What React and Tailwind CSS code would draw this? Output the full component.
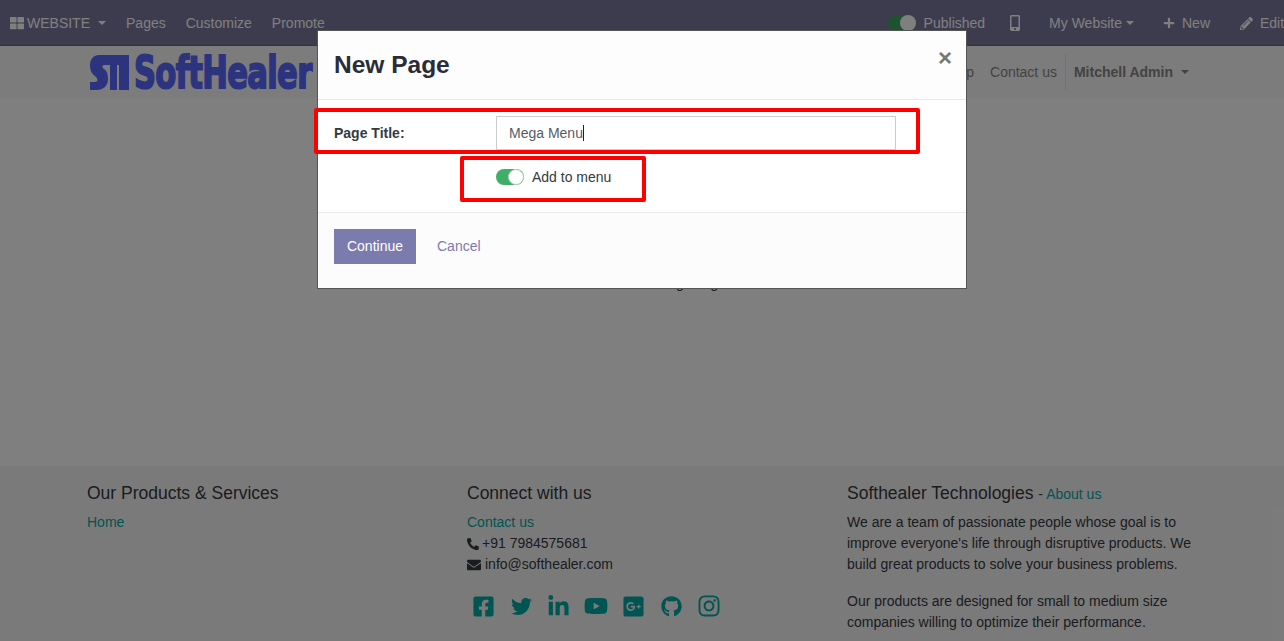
import React from "react";
import {
    FaThLarge, FaMobileAlt, FaPlus, FaPencilAlt, FaPhoneAlt, FaEnvelope,
    FaFacebookSquare, FaTwitter, FaLinkedinIn, FaYoutube, FaGooglePlusSquare, FaGithub, FaInstagram,
} from "react-icons/fa";

function Caret() {
    return <span className="inline-block w-0 h-0 border-x-[4px] border-x-transparent border-t-[4px] border-t-current" />;
}

function TopBar() {
    return (
        <header className="h-[46px] flex-none flex items-center justify-between pl-[10px] pt-[1px] bg-[#7a789e] border-b border-[#66648a] text-white text-[14px] whitespace-nowrap">
            <div className="flex items-center">
                <FaThLarge className="text-[14px] mr-[3px]" />
                <span>WEBSITE</span>
                <span className="ml-[8px] mr-[20px] flex"><Caret /></span>
                <span className="mr-[20px]">Pages</span>
                <span className="mr-[20px]">Customize</span>
                <span>Promote</span>
            </div>
            <div className="flex items-center -mr-[14px]">
                <span className="relative w-[28px] h-[16px] rounded-full bg-[#3aa65c] mr-[8px]">
                    <span className="absolute right-0 top-0 w-[16px] h-[16px] rounded-full bg-white" />
                </span>
                <span className="mr-[22px]">Published</span>
                <FaMobileAlt className="text-[16px] mr-[26px]" />
                <span className="mr-[4px]">My Website</span>
                <span className="mr-[29px] flex"><Caret /></span>
                <FaPlus className="text-[12px] mr-[7px]" />
                <span className="mr-[30px]">New</span>
                <FaPencilAlt className="text-[13px] mr-[7px]" />
                <span className="w-[38px]">Edit</span>
            </div>
        </header>
    );
}

function Logo() {
    return (
        <div className="flex items-center w-[223px] h-[36px]">
            <svg width="39" height="35" viewBox="0 0 39 35" className="flex-none">
                <path d="M9 0H39V35H29V10H27V35H20V10H14C12 10 12 13 14 14C17 16 18 19 18 24C18 31 13 35 7 35H0V27H5C8 27 8 24 6 22C2 19 0 16 0 10C0 4 4 0 9 0Z" fill="#5b69ff" />
            </svg>
            <span className="flex-none ml-[5px] origin-left scale-x-[0.68] font-['DejaVu_Sans'] font-bold text-[45px] leading-none tracking-[-1px] text-[#5b69ff] [-webkit-text-stroke:2px_#5b69ff]">SoftHealer</span>
        </div>
    );
}

function NavBar() {
    return (
        <nav className="h-[52px] flex-none bg-[#f9f9f9] flex items-center pl-[90px] pr-[95px] justify-between text-[14px] text-[#868686]">
            <Logo />
            <div className="flex items-center">
                <span className="mr-[16px]">Shop</span>
                <span>Contact us</span>
                <span className="ml-[8px] h-[36px] border-l border-[#e4e4e4] pl-[8px] flex items-center font-bold">
                    Mitchell Admin
                    <span className="ml-[8px] flex"><Caret /></span>
                </span>
            </div>
        </nav>
    );
}

function Footer() {
    const icons = [
        [FaFacebookSquare, "text-[23px]"],
        [FaTwitter, "text-[21px]"],
        [FaLinkedinIn, "text-[23px]"],
        [FaYoutube, "text-[24px]"],
        [FaGooglePlusSquare, "text-[23px]"],
        [FaGithub, "text-[21px]"],
        [FaInstagram, "text-[24px]"],
    ];
    return (
        <footer className="flex-1 bg-[#f5f5f5] pt-[16px] pl-[87px] text-[14px] leading-[21px] text-[#343a40]">
            <div className="grid grid-cols-[380px_380px_350px]">
                <section>
                    <h5 className="text-[17.5px] leading-[22px] mb-[8px]">Our Products &amp; Services</h5>
                    <a className="text-[#00a9a5]">Home</a>
                </section>
                <section>
                    <h5 className="text-[17.5px] leading-[22px] mb-[8px]">Connect with us</h5>
                    <a className="block text-[#00a9a5]">Contact us</a>
                    <div className="flex items-center gap-[3px]"><FaPhoneAlt className="text-[12px]" />+91 7984575681</div>
                    <div className="flex items-center gap-[4px]"><FaEnvelope className="text-[14px]" />info@softhealer.com</div>
                    <div className="flex items-center mt-[20px] -ml-[2px] text-[#00a9a5] h-[22px]">
                        {icons.map(([Icon, size], i) => (
                            <span key={i} className="w-[37.5px] flex-none flex justify-center">
                                <Icon className={size} />
                            </span>
                        ))}
                    </div>
                </section>
                <section>
                    <h5 className="h-[22px] text-[17.5px] leading-[22px] mb-[8px]">
                        Softhealer Technologies <span className="text-[14px]">- <a className="text-[#00a9a5]">About us</a></span>
                    </h5>
                    <p className="mb-[16px]">We are a team of passionate people whose goal is to improve everyone's life through disruptive products. We build great products to solve your business problems.</p>
                    <p>Our products are designed for small to medium size companies willing to optimize their performance.</p>
                </section>
            </div>
        </footer>
    );
}

function NewPageModal() {
    return (
        <div className="absolute left-[317px] top-[30px] w-[650px] h-[259px] bg-white border border-[#555555] text-[14px] text-[#343a40]">
            <div className="relative h-[69px] border-b border-[#e9e9e9] bg-[#fdfdfd] flex items-center pl-[16px]">
                <h4 className="text-[24.5px] font-bold text-[#2c2c36] leading-none">New Page</h4>
                <span className="absolute right-[14px] top-[15px] text-[24px] font-bold leading-[24px] text-[#777777]">×</span>
            </div>
            <div className="h-[112px] pt-[16px] pl-[16px]">
                <div className="flex items-center h-[34px]">
                    <label className="w-[162px] font-bold">Page Title:</label>
                    <div className="w-[400px] h-[34px] border border-[#cccccc] flex items-center pl-[12px] text-[#555b66]">
                        Mega Menu<span className="w-px h-[16px] bg-[#222222]" />
                    </div>
                </div>
                <div className="flex items-center ml-[162px] mt-[10px] h-[34px]">
                    <span className="relative w-[28px] h-[16px] rounded-full bg-[#3fae67] mr-[8px]">
                        <span className="absolute right-0 top-0 w-[16px] h-[16px] rounded-full bg-white border border-[#b9cdbf]" />
                    </span>
                    <span>Add to menu</span>
                </div>
            </div>
            <div className="h-[76px] border-t border-[#e9ecef] bg-[#fcfcfd] pt-[16px] pl-[16px] flex items-start">
                <button className="w-[82px] h-[35px] bg-[#7c7bad] text-white">Continue</button>
                <button className="ml-[21px] h-[35px] text-[#7c7bad]">Cancel</button>
            </div>
            {/* red marks from the screenshot annotation */}
            <div className="absolute left-[-4px] top-[77px] w-[606px] h-[46px] border-[4px] border-[#ff0000] rounded-[2px]" />
            <div className="absolute left-[142px] top-[125px] w-[186px] h-[46px] border-[4px] border-[#ff0000] rounded-[2px]" />
        </div>
    );
}

export default function App() {
    return (
        <div className="relative h-screen overflow-hidden flex flex-col bg-white font-['Liberation_Sans',sans-serif]">
            <TopBar />
            <NavBar />
            <main className="h-[368px] flex-none pt-[175px] pl-[10px] text-center text-[14px] leading-[21px] text-[#343a40]">
                This site's content is getting built
            </main>
            <Footer />
            <div className="absolute inset-0 bg-black/50" />
            <NewPageModal />
        </div>
    );
}
